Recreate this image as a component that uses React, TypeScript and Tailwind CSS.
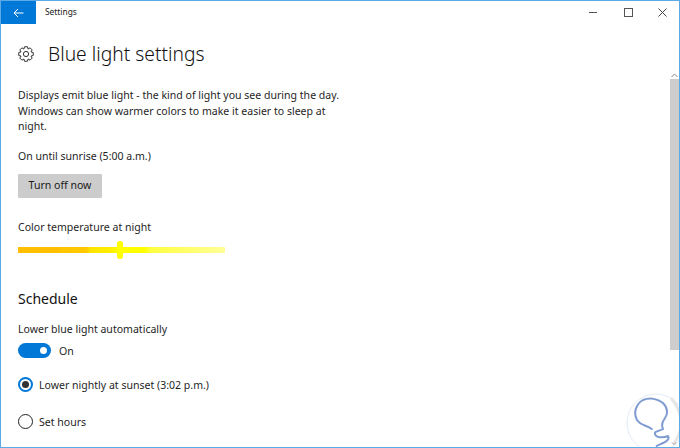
import React from "react";

const gearPoints = Array.from({ length: 8 })
  .flatMap((_, i) => {
    const c = (i * Math.PI) / 4 - Math.PI / 2;
    const pts: [number, number][] = [
      [5.4, c - 0.39],
      [7.4, c - 0.2],
      [7.4, c + 0.2],
      [5.4, c + 0.39],
    ];
    return pts.map(([r, a]) => `${(8 + r * Math.cos(a)).toFixed(2)},${(8 + r * Math.sin(a)).toFixed(2)}`);
  })
  .join(" ");

function Gear() {
  return (
    <svg width="16" height="16" viewBox="0 0 16 16" fill="none" stroke="#333" strokeWidth="1" strokeLinejoin="round">
      <circle cx="8" cy="8" r="2.6" />
      <polygon points={gearPoints} />
    </svg>
  );
}

function Logo() {
  return (
    <svg width="54" height="54" viewBox="0 0 54 54" fill="none" className="absolute right-0 bottom-0">
      <circle cx="31" cy="30" r="29" fill="#fff" stroke="#e3ebf5" strokeWidth="1" />
      <path d="M46 5 C52 12 56 20 56 30 C56 38 53 45 49 50" stroke="#e6e6e6" strokeWidth="3" />
      <path d="M26.7 36 C22 32 16 33 12 27 C8 20 11 11 18 7 C25 4 33 6 38 10 C43 15 43 21 40 25 C37 29 36 32 38 36 C35 38 29 38 30 41 C31 45 38 45 43 43 C45 46 41 49 38 50 C36 51 33 52 31.7 53" stroke="#7f9bd2" strokeWidth="2" strokeLinecap="round" strokeLinejoin="round" />
      <path d="M47 49.5 49 51.5 51 49.5" stroke="#777" strokeWidth="0.8" />
    </svg>
  );
}

export default function App() {
  return (
    <div className="relative w-[680px] h-[448px] overflow-hidden bg-white border border-[#5caae6] flex flex-col text-[#1f1f1f] font-['Noto_Sans','Open_Sans',sans-serif]">
      <header className="flex items-center h-[23px] shrink-0">
        <div className="w-[35px] h-full bg-[#0078d7] flex items-center justify-center">
          <svg width="11" height="10" viewBox="0 0 11 10" fill="none" stroke="#fff" strokeWidth="1">
            <path d="M10.5 5H1M5 1 1 5l4 4" />
          </svg>
        </div>
        <span className="ml-[9px] text-[8.4px] text-[#222]">Settings</span>
        <div className="ml-auto flex items-center">
          <div className="w-[34px] flex justify-center pr-[3px]">
            <div className="w-[8px] h-[1px] bg-[#555]" />
          </div>
          <div className="w-[34px] flex justify-center">
            <div className="w-[9px] h-[9px] border border-[#555]" />
          </div>
          <div className="w-[34px] flex justify-center">
            <svg width="9" height="9" viewBox="0 0 9 9" stroke="#444" strokeWidth="1">
              <path d="M.5.5l8 8M8.5.5l-8 8" />
            </svg>
          </div>
        </div>
      </header>

      <div className="flex flex-1 min-h-0">
        <main className="flex-1 pl-[17px] pt-[16px]">
          <div className="flex items-center gap-[14px] h-[28px]">
            <Gear />
            <h1 className="text-[19.25px] font-light text-[#111]">Blue light settings</h1>
          </div>

          <p className="mt-[20px] w-[330px] text-[10.55px] leading-[15.5px]">
            Displays emit blue light - the kind of light you see during the day. Windows can show warmer colors to make it easier to sleep at night.
          </p>

          <p className="mt-[13px] text-[10.55px] leading-[16px]">On until sunrise (5:00 a.m.)</p>

          <button className="block mt-[10px] w-[84px] h-[24px] bg-[#cccccc] text-[10.55px] text-[#1a1a1a] rounded-[1px]">Turn off now</button>

          <p className="mt-[21px] text-[10.55px] leading-[16px]">Color temperature at night</p>

          <div className="relative mt-[6px] w-[207px] h-[18px] flex items-center">
            <div className="w-full h-[6px] bg-[linear-gradient(to_right,#ffbf00_0%,#ffbf00_20%,#ffc600_21%,#ffc800_33%,#ffe400_35%,#ffee00_45%,#ffff00_50%,#ffff00_61%,#ffff40_64%,#ffff96_100%)]" />
            <div className="absolute left-[99px] top-0 w-[6px] h-[18px] rounded-full bg-[#ffff00]" />
          </div>

          <h2 className="mt-[30px] text-[14px] leading-[20px] font-normal text-[#111]">Schedule</h2>

          <p className="mt-[12px] text-[10.55px] leading-[16px]">Lower blue light automatically</p>

          <div className="mt-[6px] flex items-center gap-[8px]">
            <div className="w-[33px] h-[15px] rounded-full bg-[#0078d7] flex items-center justify-end pr-[4px]">
              <div className="w-[7px] h-[7px] rounded-full bg-white" />
            </div>
            <span className="text-[10.55px] leading-[16px]">On</span>
          </div>

          <div className="mt-[18px] flex items-center gap-[6px]">
            <div className="w-[15px] h-[15px] rounded-full border-2 border-[#0078d7] flex items-center justify-center">
              <div className="w-[7px] h-[7px] rounded-full bg-[#333]" />
            </div>
            <span className="text-[10.55px] leading-[16px]">Lower nightly at sunset (3:02 p.m.)</span>
          </div>

          <div className="mt-[21px] flex items-center gap-[6px]">
            <div className="w-[15px] h-[15px] rounded-full border-[1.5px] border-[#222]" />
            <span className="text-[10.55px] leading-[16px]">Set hours</span>
          </div>
        </main>

        <aside className="w-[9px] shrink-0 flex flex-col items-center">
          <div className="h-[54px] flex items-end justify-center">
            <svg width="7" height="5" viewBox="0 0 7 5" fill="none" stroke="#888"><path d="M.5 4 3.5 1l3 3" /></svg>
          </div>
          <div className="mt-[1px] w-full h-[271px] bg-[#cdcdcd]" />
        </aside>
      </div>
      <Logo />
    </div>
  );
}
